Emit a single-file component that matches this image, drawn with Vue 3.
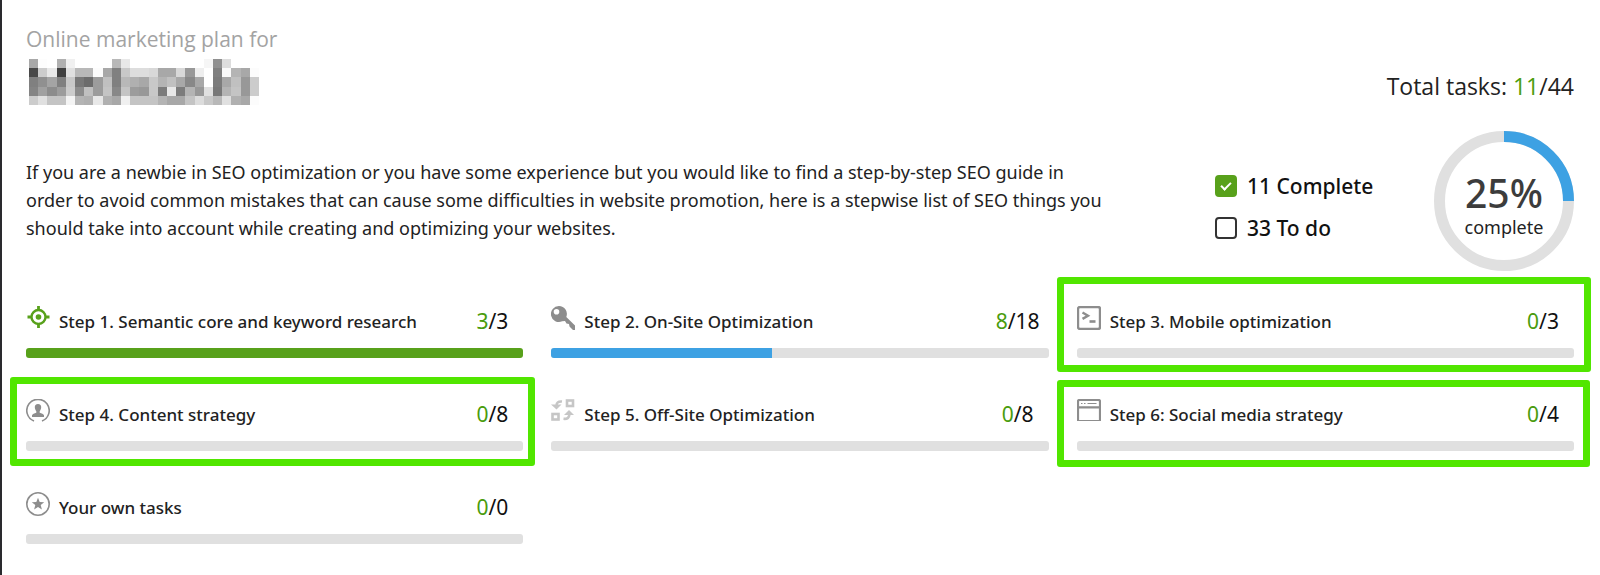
<script setup>
const mosaic = [
  'a8 fd ff b0 f0 ff ff ff ff b8 e8 ff ff ff ff ff ff ff ff f6 90 dd ff ff ff',
  '48 cc e8 40 e0 b8 b8 fc a8 80 c8 dd dd d8 a8 a8 d8 98 ee ff 80 fa b4 a8 fc',
  '80 90 a4 80 c8 78 6c 9c c0 80 b8 b0 a8 c8 b4 c0 a8 88 a8 ff 7c a8 c0 98 cc',
  '84 a0 8c 9c cc 8c c0 9c c4 88 c4 9c 98 c8 7c e8 7c b4 98 e0 78 b4 c4 98 cc',
  'cc e0 c4 c4 f4 b4 b0 e8 b0 a8 f0 c4 c4 c4 b4 a8 a8 c4 dc c8 b8 e0 b0 a8 fc',
].flatMap((row, y) => row.split(' ').map((v, x) => ({ x, y, fill: `#${v}${v}${v}` })))

const steps = [
  { icon: 'target', title: 'Step 1. Semantic core and keyword research', done: 3, total: 3 },
  { icon: 'key', title: 'Step 2. On-Site Optimization', done: 8, total: 18 },
  { icon: 'terminal', title: 'Step 3. Mobile optimization', done: 0, total: 3, mark: 'mark-tall' },
  { icon: 'person', title: 'Step 4. Content strategy', done: 0, total: 8, mark: 'mark-left' },
  { icon: 'swap', title: 'Step 5. Off-Site Optimization', done: 0, total: 8 },
  { icon: 'window', title: 'Step 6: Social media strategy', done: 0, total: 4, mark: 'mark-right' },
  { icon: 'star', title: 'Your own tasks', done: 0, total: 0 },
]
const percent = (s) => (s.total ? (s.done / s.total) * 100 : 0)
</script>

<template>
  <main class="plan">
    <header class="head">
      <div>
        <p class="kicker">Online marketing plan for</p>
        <svg class="mosaic" viewBox="0 0 25 5" preserveAspectRatio="none" shape-rendering="crispEdges" role="img" aria-label="Hidden site name">
          <rect v-for="c in mosaic" :key="`${c.x}-${c.y}`" :x="c.x" :y="c.y" width="1" height="1" :fill="c.fill" />
        </svg>
      </div>
      <p class="total">Total tasks: <span class="green">11</span>/44</p>
    </header>

    <section class="summary">
      <p class="intro">
        If you are a newbie in SEO optimization or you have some experience but you would like to find a step-by-step SEO guide in
        order to avoid common mistakes that can cause some difficulties in website promotion, here is a stepwise list of SEO things you
        should take into account while creating and optimizing your websites.
      </p>
      <div class="legend">
        <label><input type="checkbox" checked />11 Complete</label>
        <label><input type="checkbox" />33 To do</label>
      </div>
      <div class="ring">
        <svg viewBox="0 0 140 140" aria-hidden="true">
          <circle cx="70" cy="70" r="64.5" fill="none" stroke="#e0e0e0" stroke-width="11" />
          <path d="M70 5.5A64.5 64.5 0 0 1 134.500 70" fill="none" stroke="#3da1e3" stroke-width="11" />
        </svg>
        <div class="ring-text"><strong>25%</strong><span>complete</span></div>
      </div>
    </section>

    <section class="steps">
      <article v-for="s in steps" :key="s.title" class="step">
        <div v-if="s.mark" class="mark" :class="s.mark"></div>
        <div class="line">
          <svg class="icon" viewBox="0 0 24 24" aria-hidden="true">
            <g v-if="s.icon === 'target'" fill="none" stroke="#58a11b">
              <circle cx="12.500" cy="11" r="7" stroke-width="2.400" />
              <circle cx="12.500" cy="11" r="2.800" fill="#58a11b" stroke="none" />
              <path d="M12.500 0v4M12.500 18v4M1.500 11h4M19.500 11h4" stroke-width="2.800" />
            </g>
            <g v-else-if="s.icon === 'key'">
              <path fill="#8d8d8d" fill-rule="evenodd" d="M8 0a8 8 0 1 0 3.200 15.300L14 15l1.500 2.500 2.500.5.500 2.500L22 24h2v-4.500L15.300 11A8 8 0 0 0 8 0zM5.500 3a2.800 2.800 0 1 1 0 5.600 2.800 2.800 0 0 1 0-5.600z" />
            </g>
            <g v-else-if="s.icon === 'terminal'" fill="none" stroke="#8d8d8d">
              <rect x="1" y="1" width="22" height="22" rx="2" stroke-width="2.400" />
              <path d="M5.500 6.500l5.500 3.200-5.500 3.200" stroke-width="2.400" />
              <path d="M12.500 15.500h6" stroke-width="2.600" />
            </g>
            <g v-else-if="s.icon === 'person'">
              <path fill="none" stroke="#8d8d8d" stroke-width="1.600" d="M8 22A11.200 11.200 0 1 1 16 22" />
              <path fill="#8d8d8d" d="M12 5c2.200 0 3.300 1.500 3.200 3.300-.1 1.800-.8 3-1.500 3.900v1.500c1.800.8 4 1.200 4.300 2.600v1.700H6v-1.700c.300-1.400 2.500-1.800 4.300-2.600v-1.500c-.7-.9-1.400-2.100-1.500-3.900C8.700 6.500 9.800 5 12 5z" />
            </g>
            <g v-else-if="s.icon === 'swap'" fill="none" stroke="#c6c6c6">
              <rect x="16" y="1.500" width="6" height="5.500" stroke-width="2.600" />
              <rect x="1.500" y="15" width="6" height="5.500" stroke-width="2.600" />
              <path d="M11 2.500C7.500 2.200 5.800 3.500 5.500 6" stroke-width="2.600" />
              <path d="M0 5.500h10.500L5.500 10.500z" fill="#c6c6c6" stroke="none" />
              <path d="M12.500 19.800c3.500.3 5.500-1 5.800-4" stroke-width="2.600" />
              <path d="M13 16h10l-5-5z" fill="#c6c6c6" stroke="none" />
            </g>
            <g v-else-if="s.icon === 'window'" fill="none" stroke="#8d8d8d">
              <path d="M1 22V2.500Q1 1 2.500 1h19Q23 1 23 2.500V22M1 8.300h22" stroke-width="2.200" />
              <path d="M0 21.500h24" stroke-width="1" />
              <path d="M4 4.500h1.500M7 4.500h1.500M10.500 4.500h9" stroke-width="1" />
            </g>
            <g v-else>
              <circle cx="12" cy="12" r="11.200" fill="none" stroke="#8d8d8d" stroke-width="1.600" />
              <path fill="#8d8d8d" d="M12 5.800l1.700 4.200 4.500.3-3.500 2.800 1.200 4.400L12 15l-3.900 2.500 1.200-4.400-3.500-2.800 4.500-.3z" />
            </g>
          </svg>
          <h2>{{ s.title }}</h2>
          <span class="count"><span class="green">{{ s.done }}</span>/{{ s.total }}</span>
        </div>
        <div class="bar" role="progressbar" :aria-label="s.title" :aria-valuenow="s.done" aria-valuemin="0" :aria-valuemax="s.total">
          <div class="fill" :class="{ full: s.done === s.total }" :style="{ width: percent(s) + '%' }"></div>
        </div>
      </article>
    </section>
  </main>
</template>

<style>
body {
  margin: 0;
  background: #fff;
}
</style>

<style scoped>
.plan {
  box-sizing: border-box;
  min-height: 100vh;
  padding: 24px 26px 32px 24px;
  border-left: 2px solid #2a2a2e;
  color: #222;
  font-family: "Noto Sans", "Open Sans", sans-serif;
}
p, h2 {
  margin: 0;
}
.green {
  color: #4a9c0d;
}
.head {
  display: flex;
  justify-content: space-between;
  align-items: flex-end;
}
.kicker {
  color: #a3a3a3;
  font-family: "Open Sans", "Noto Sans", sans-serif;
  font-size: 21px;
  line-height: 30px;
}
.mosaic {
  display: block;
  width: 230px;
  height: 46px;
  margin: 5px 0 0 3px;
}
.total {
  font-family: "Open Sans", "Noto Sans", sans-serif;
  font-size: 23px;
  line-height: 38px;
}
.summary {
  display: flex;
  margin-top: 26px;
}
.intro {
  flex: 1;
  max-width: 1086px;
  padding-top: 27px;
  font-size: 18px;
  line-height: 28px;
}
.legend {
  display: flex;
  flex-direction: column;
  gap: 12px;
  width: 219px;
  margin-left: auto;
  padding-top: 40px;
  color: #111;
  font-size: 21px;
  font-weight: 500;
  line-height: 30px;
}
.legend label {
  display: flex;
  align-items: center;
  gap: 10px;
}
.legend input {
  appearance: none;
  position: relative;
  width: 22px;
  height: 22px;
  margin: 0;
  border: 2px solid #333;
  border-radius: 4px;
}
.legend input:checked {
  border-color: #58a11b;
  background: #58a11b;
}
.legend input:checked::after {
  content: "";
  position: absolute;
  left: 4px;
  top: 5px;
  width: 8px;
  height: 4px;
  border: solid #fff;
  border-width: 0 0 2px 2px;
  transform: rotate(-45deg);
}
.ring {
  display: grid;
  width: 140px;
  height: 140px;
}
.ring > * {
  grid-area: 1 / 1;
}
.ring-text {
  display: flex;
  flex-direction: column;
  align-items: center;
  padding-top: 41px;
}
.ring-text strong {
  color: #3c3c3c;
  font-size: 39px;
  font-weight: 500;
  line-height: 42px;
}
.ring-text span {
  font-size: 18px;
  line-height: 26px;
}
.steps {
  display: grid;
  grid-template-columns: repeat(3, 1fr);
  gap: 41px 28px;
  margin-top: 35px;
}
.step {
  position: relative;
}
.line {
  display: flex;
  height: 42px;
}
.icon {
  flex: none;
  width: 24px;
  height: 24px;
}
h2 {
  flex: 1;
  margin-left: 9px;
  padding-top: 2px;
  font-size: 17px;
  font-weight: 500;
  line-height: 28px;
}
.count {
  width: 62px;
  color: #111;
  font-size: 21px;
  line-height: 30px;
  text-align: center;
}
.bar {
  height: 10px;
  overflow: hidden;
  border-radius: 3px;
  background: #e0e0e0;
}
.fill {
  height: 100%;
  background: #3da1e3;
}
.fill.full {
  background: #58a11b;
}
.mark {
  position: absolute;
  border: 7px solid #51e600;
  border-radius: 3px;
}
.mark-tall {
  inset: -29px -17px -14px -20px;
}
.mark-left {
  inset: -22px -12px -15px -16px;
}
.mark-right {
  inset: -19px -16px -16px -20px;
}
</style>
